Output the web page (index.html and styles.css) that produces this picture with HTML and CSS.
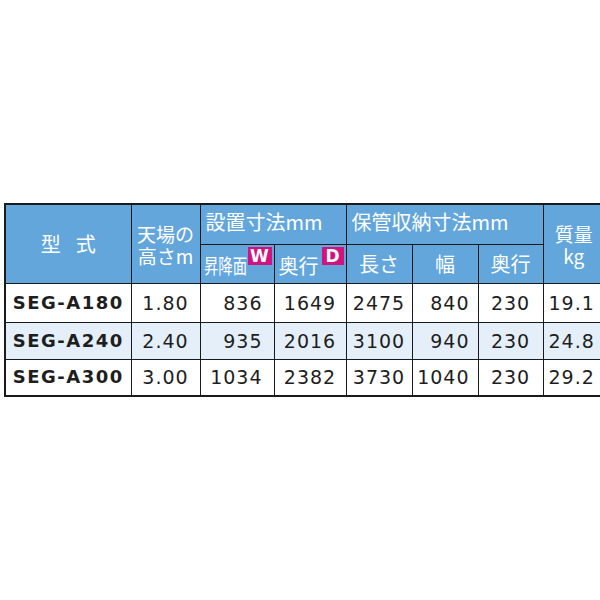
FILE: index.html
```html
<!DOCTYPE html>
<html lang="ja">
<head>
<meta charset="utf-8">
<title>SEG-A 仕様</title>
<link rel="stylesheet" href="styles.css">
</head>
<body>
<div class="page">
  <table class="spec">
    <colgroup>
      <col class="c1"><col class="c2"><col class="c3"><col class="c4"><col class="c5"><col class="c6"><col class="c7"><col class="c8">
    </colgroup>
    <thead>
      <tr class="h1">
        <th rowspan="2" class="model-h"><span class="sp">型</span>式</th>
        <th rowspan="2" class="two">天場の<br>高さm</th>
        <th colspan="2" class="group">設置寸法mm</th>
        <th colspan="3" class="group">保管収納寸法mm</th>
        <th rowspan="2" class="two">質量<br>kg</th>
      </tr>
      <tr class="h2">
        <th class="badged"><span class="squeeze">昇降面</span><span class="badge bw">W</span></th>
        <th class="badged"><span class="plain">奥行</span><span class="badge bd">D</span></th>
        <th>長さ</th>
        <th>幅</th>
        <th>奥行</th>
      </tr>
    </thead>
    <tbody>
      <tr class="r1">
        <td class="model">SEG-A180</td><td class="ctr">1.80</td><td class="rt">836</td><td class="ctr">1649</td><td class="ctr">2475</td><td class="rt2">840</td><td class="ctr">230</td><td class="lt">19.1</td>
      </tr>
      <tr class="r2 alt">
        <td class="model">SEG-A240</td><td class="ctr">2.40</td><td class="rt">935</td><td class="ctr">2016</td><td class="ctr">3100</td><td class="rt2">940</td><td class="ctr">230</td><td class="lt">24.8</td>
      </tr>
      <tr class="r3">
        <td class="model">SEG-A300</td><td class="ctr">3.00</td><td class="rt">1034</td><td class="ctr">2382</td><td class="ctr">3730</td><td class="rt2">1040</td><td class="ctr">230</td><td class="lt">29.2</td>
      </tr>
    </tbody>
  </table>
</div>
</body>
</html>
```
FILE: styles.css
```css
html, body {
  margin: 0;
  padding: 0;
  background: #ffffff;
}
.page {
  width: 600px;
  height: 600px;
  overflow: hidden;
  padding: 203px 0 0 4px;
  box-sizing: border-box;
}
.spec {
  border-collapse: collapse;
  table-layout: fixed;
  width: 600px;
  border: 2px solid #1a1a1a;
}
.c1 { width: 126px; }
.c2 { width: 69px; }
.c3 { width: 74px; }
.c4 { width: 72px; }
.c5 { width: 66px; }
.c6 { width: 66px; }
.c7 { width: 65px; }
.c8 { width: 62px; }

.spec th, .spec td {
  border: 1px solid #1a1a1a;
  padding: 0;
  white-space: nowrap;
  overflow: hidden;
}
.spec th {
  background: #63a6dc;
  color: #ffffff;
  font-family: "Noto Sans CJK JP", "Noto Sans", sans-serif;
  font-weight: 400;
  font-size: 20px;
  line-height: 20px;
  text-align: center;
  vertical-align: middle;
}
.h1 { height: 40px; }
.h2 { height: 39px; }
.spec .h1 th { vertical-align: top; padding-top: 7px; }
.spec .h1 th.group { text-align: left; padding-left: 5px; }
.spec .h1 th.model-h { vertical-align: middle; padding-top: 0; }
.spec .h1 th.two {
  vertical-align: middle;
  padding-top: 2px;
  font-size: 19px;
  line-height: 22px;
}
.spec .h2 th { vertical-align: bottom; padding-bottom: 9px; }
.sp { margin-right: 15px; }
.spec th.badged {
  position: relative;
  text-align: left;
}
.spec .h2 th.badged { padding-bottom: 7px; }
.squeeze {
  display: inline-block;
  transform: scaleX(0.72);
  transform-origin: left center;
  padding-left: 4px;
}
.plain {
  display: inline-block;
  padding-left: 4px;
}
.badge {
  position: absolute;
  top: 2px;
  right: 2px;
  height: 18px;
  background: #d2127f;
  color: #ffffff;
  font-family: "DejaVu Sans", sans-serif;
  font-weight: bold;
  font-size: 17px;
  line-height: 18px;
  text-align: center;
}
.bw { width: 24px; }
.bd { width: 22px; }

.spec td {
  background: #ffffff;
  color: #1e1e1e;
  font-family: "DejaVu Sans", "Noto Sans", sans-serif;
  font-size: 19px;
  letter-spacing: 1px;
  line-height: 20px;
  vertical-align: middle;
}
.r1 { height: 39px; }
.r2 { height: 37px; }
.r3 { height: 37px; }
.spec tr.alt td { background: #e4eff9; }
.spec td.model {
  font-weight: bold;
  font-size: 18px;
  letter-spacing: 1.5px;
  text-align: center;
}
.spec td.ctr { text-align: center; }
.spec td.rt { text-align: right; padding-right: 11px; }
.spec td.rt2 { text-align: right; padding-right: 8px; }
.spec td.lt { text-align: left; padding-left: 5px; }
```
